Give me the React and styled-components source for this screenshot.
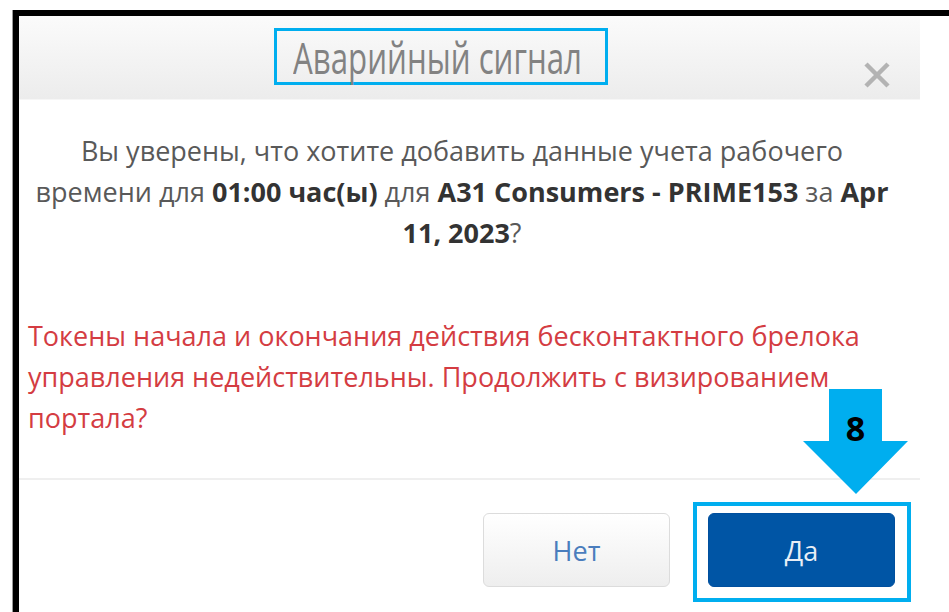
import React from 'react';
import styled, { createGlobalStyle } from 'styled-components';

const GlobalStyle = createGlobalStyle`
  html, body {
    margin: 0;
    padding: 0;
    background: #fff;
    font-family: "Open Sans", "Liberation Sans", sans-serif;
  }
`;

const Page = styled.div`
  width: 949px;
  height: 612px;
  overflow: hidden;
  padding: 10px 0 0 13px;
  box-sizing: border-box;
`;

const Frame = styled.div`
  height: 100%;
  border-top: 6px solid #000;
  border-left: 6px solid #000;
  box-shadow: -1px 0 0 #9a9a9a;
  box-sizing: border-box;
  position: relative;
`;

const Dialog = styled.div`
  width: 901px;
  display: flex;
  flex-direction: column;
`;

const Header = styled.div`
  height: 84px;
  display: flex;
  align-items: flex-start;
  background: linear-gradient(#fbfbfb, #ececec);
  border-bottom: 1px solid #f6f6f6;
  box-sizing: border-box;
`;

const TitleSlot = styled.div`
  flex: 1;
  display: flex;
  justify-content: center;
  padding-top: 12px;
`;

const TitleBox = styled.div`
  width: 334px;
  height: 57px;
  border: 3px solid #00aeef;
  box-sizing: border-box;
  display: flex;
  align-items: center;
  justify-content: center;
  padding-right: 6px;
`;

const TitleText = styled.span`
  font-size: 44px;
  font-weight: 400;
  color: #828282;
  white-space: nowrap;
  transform: scaleX(0.71);
  transform-origin: center;
`;

const CloseButton = styled.button`
  width: 30px;
  height: 30px;
  margin: 44px 28px 0 0;
  padding: 0;
  border: none;
  background: transparent;
  cursor: pointer;
  display: flex;
  align-items: center;
  justify-content: center;
`;

const Body = styled.div`
  padding: 30px 24px 0 9px;
`;

const Question = styled.p`
  margin: 0;
  text-align: center;
  font-size: 27px;
  line-height: 41px;
  color: #595959;

  b {
    color: #333;
    font-weight: 700;
  }
`;

const Warning = styled.p`
  margin: 62px 0 0;
  font-size: 27px;
  line-height: 41px;
  color: #d43c42;
`;

const Footer = styled.div`
  margin-top: 40px;
  border-top: 2px solid #efefef;
  padding: 22px 9px 0 0;
  display: flex;
  justify-content: flex-end;
  align-items: flex-start;
  gap: 23px;
`;

const Button = styled.button`
  width: 187px;
  height: 74px;
  border-radius: 6px;
  font-family: "Open Sans", "Liberation Sans", sans-serif;
  font-size: 27px;
  cursor: pointer;
  border: 1px solid ${p => (p.$primary ? '#004f9e' : '#dcdcdc')};
  background: ${p => (p.$primary ? '#0055a5' : 'linear-gradient(#ffffff, #eeeeee)')};
  color: ${p => (p.$primary ? '#e8eef6' : '#4a7dbd')};
  margin-top: ${p => (p.$primary ? '0' : '11px')};
`;

const Highlight = styled.div`
  border: 4px solid #00aeef;
  padding: 7px 12px 11px 11px;
`;

const Callout = styled.div`
  position: absolute;
  left: 784px;
  top: 373px;
  width: 105px;
  height: 105px;
`;

const CalloutNumber = styled.span`
  position: absolute;
  left: 0;
  right: 0;
  top: 22px;
  text-align: center;
  font-family: "Open Sans", "Liberation Sans", sans-serif;
  font-weight: 700;
  font-size: 34px;
  line-height: 1;
  color: #000;
`;

const CloseIcon = () => (
  <svg width="28" height="28" viewBox="0 0 28 28">
    <path d="M3 3 L25 25 M25 3 L3 25" stroke="#b3b3b3" strokeWidth="4.5" strokeLinecap="butt" />
  </svg>
);

const ArrowDown = () => (
  <svg width="105" height="105" viewBox="0 0 105 105">
    <polygon points="26,0 79,0 79,52 105,52 53,105 0,52 26,52" fill="#00aeef" />
  </svg>
);

export default function App() {
  return (
    <>
      <GlobalStyle />
      <Page>
        <Frame>
          <Dialog>
            <Header>
              <TitleSlot>
                <TitleBox>
                  <TitleText>Аварийный сигнал</TitleText>
                </TitleBox>
              </TitleSlot>
              <CloseButton aria-label="Закрыть">
                <CloseIcon />
              </CloseButton>
            </Header>
            <Body>
              <Question>
                Вы уверены, что хотите добавить данные учета рабочего времени для{' '}
                <b>01:00 час(ы)</b> для <b>A31 Consumers - PRIME153</b> за <b>Apr 11, 2023</b>?
              </Question>
              <Warning>
                Токены начала и окончания действия бесконтактного брелока управления
                недействительны. Продолжить с визированием портала?
              </Warning>
            </Body>
            <Footer>
              <Button>Нет</Button>
              <Highlight>
                <Button $primary>Да</Button>
              </Highlight>
            </Footer>
          </Dialog>
          <Callout>
            <ArrowDown />
            <CalloutNumber>8</CalloutNumber>
          </Callout>
        </Frame>
      </Page>
    </>
  );
}
